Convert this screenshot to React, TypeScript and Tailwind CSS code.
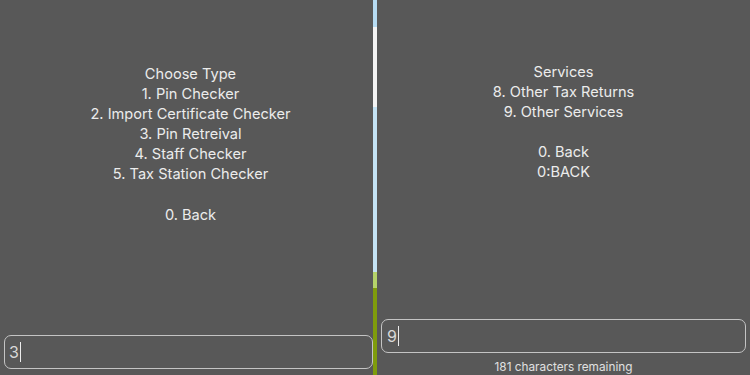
export default function App() {
  const left = [
    "Choose Type",
    "1. Pin Checker",
    "2. Import Certificate Checker",
    "3. Pin Retreival",
    "4. Staff Checker",
    "5. Tax Station Checker",
    "",
    "0. Back",
  ];
  const right = [
    "Services",
    "8. Other Tax Returns",
    "9. Other Services",
    "",
    "0. Back",
    "0:BACK",
  ];

  return (
    <div
      className="flex h-[375px] w-[750px] overflow-hidden bg-[#585858] text-[#ececec]"
      style={{ fontFamily: "Inter, 'Open Sans', sans-serif" }}
    >
      {/* left session */}
      <div className="flex w-[373px] flex-col">
        <div className="pl-[8px] pt-[64px] text-center text-[14.6px] leading-[20.1px]">
          {left.map((line, i) => (
            <div key={i} className="h-[20.1px]">
              {line}
            </div>
          ))}
        </div>
        <div className="flex-1" />
        <div className="mb-[6px] ml-[4px] flex h-[34px] items-center rounded-[7px] border border-[#c4c4c4] pl-[4px] text-[16px] text-[#d8d8d8]">
          <span>3</span>
          <span className="ml-[1px] h-[20px] w-[1px] bg-[#ececec]" />
        </div>
      </div>

      {/* divider */}
      <div className="flex w-[4px] flex-col">
        <div className="h-[27px] bg-[#b7dcf3]" />
        <div className="h-[80px] bg-[#f4f4f4]" />
        <div className="h-[165px] bg-[#c4e3f5]" />
        <div className="h-[16px] bg-[#b5d36a]" />
        <div className="flex-1 bg-[#7f9c0c]" />
      </div>

      {/* right session */}
      <div className="flex w-[373px] flex-col">
        <div className="pt-[62px] text-center text-[14.6px] leading-[20px]">
          {right.map((line, i) => (
            <div key={i} className="h-[20px]">
              {line}
            </div>
          ))}
        </div>
        <div className="flex-1" />
        <div className="ml-[4px] mr-[4px] flex h-[34px] items-center rounded-[7px] border border-[#c4c4c4] pl-[5px] text-[16px] text-[#d8d8d8]">
          <span>9</span>
          <span className="ml-[1px] h-[20px] w-[1px] bg-[#ececec]" />
        </div>
        <div className="h-[22px] pt-[7px] text-center text-[11.8px] leading-[14px] text-[#e0e0e0]">
          181 characters remaining
        </div>
      </div>
    </div>
  );
}
